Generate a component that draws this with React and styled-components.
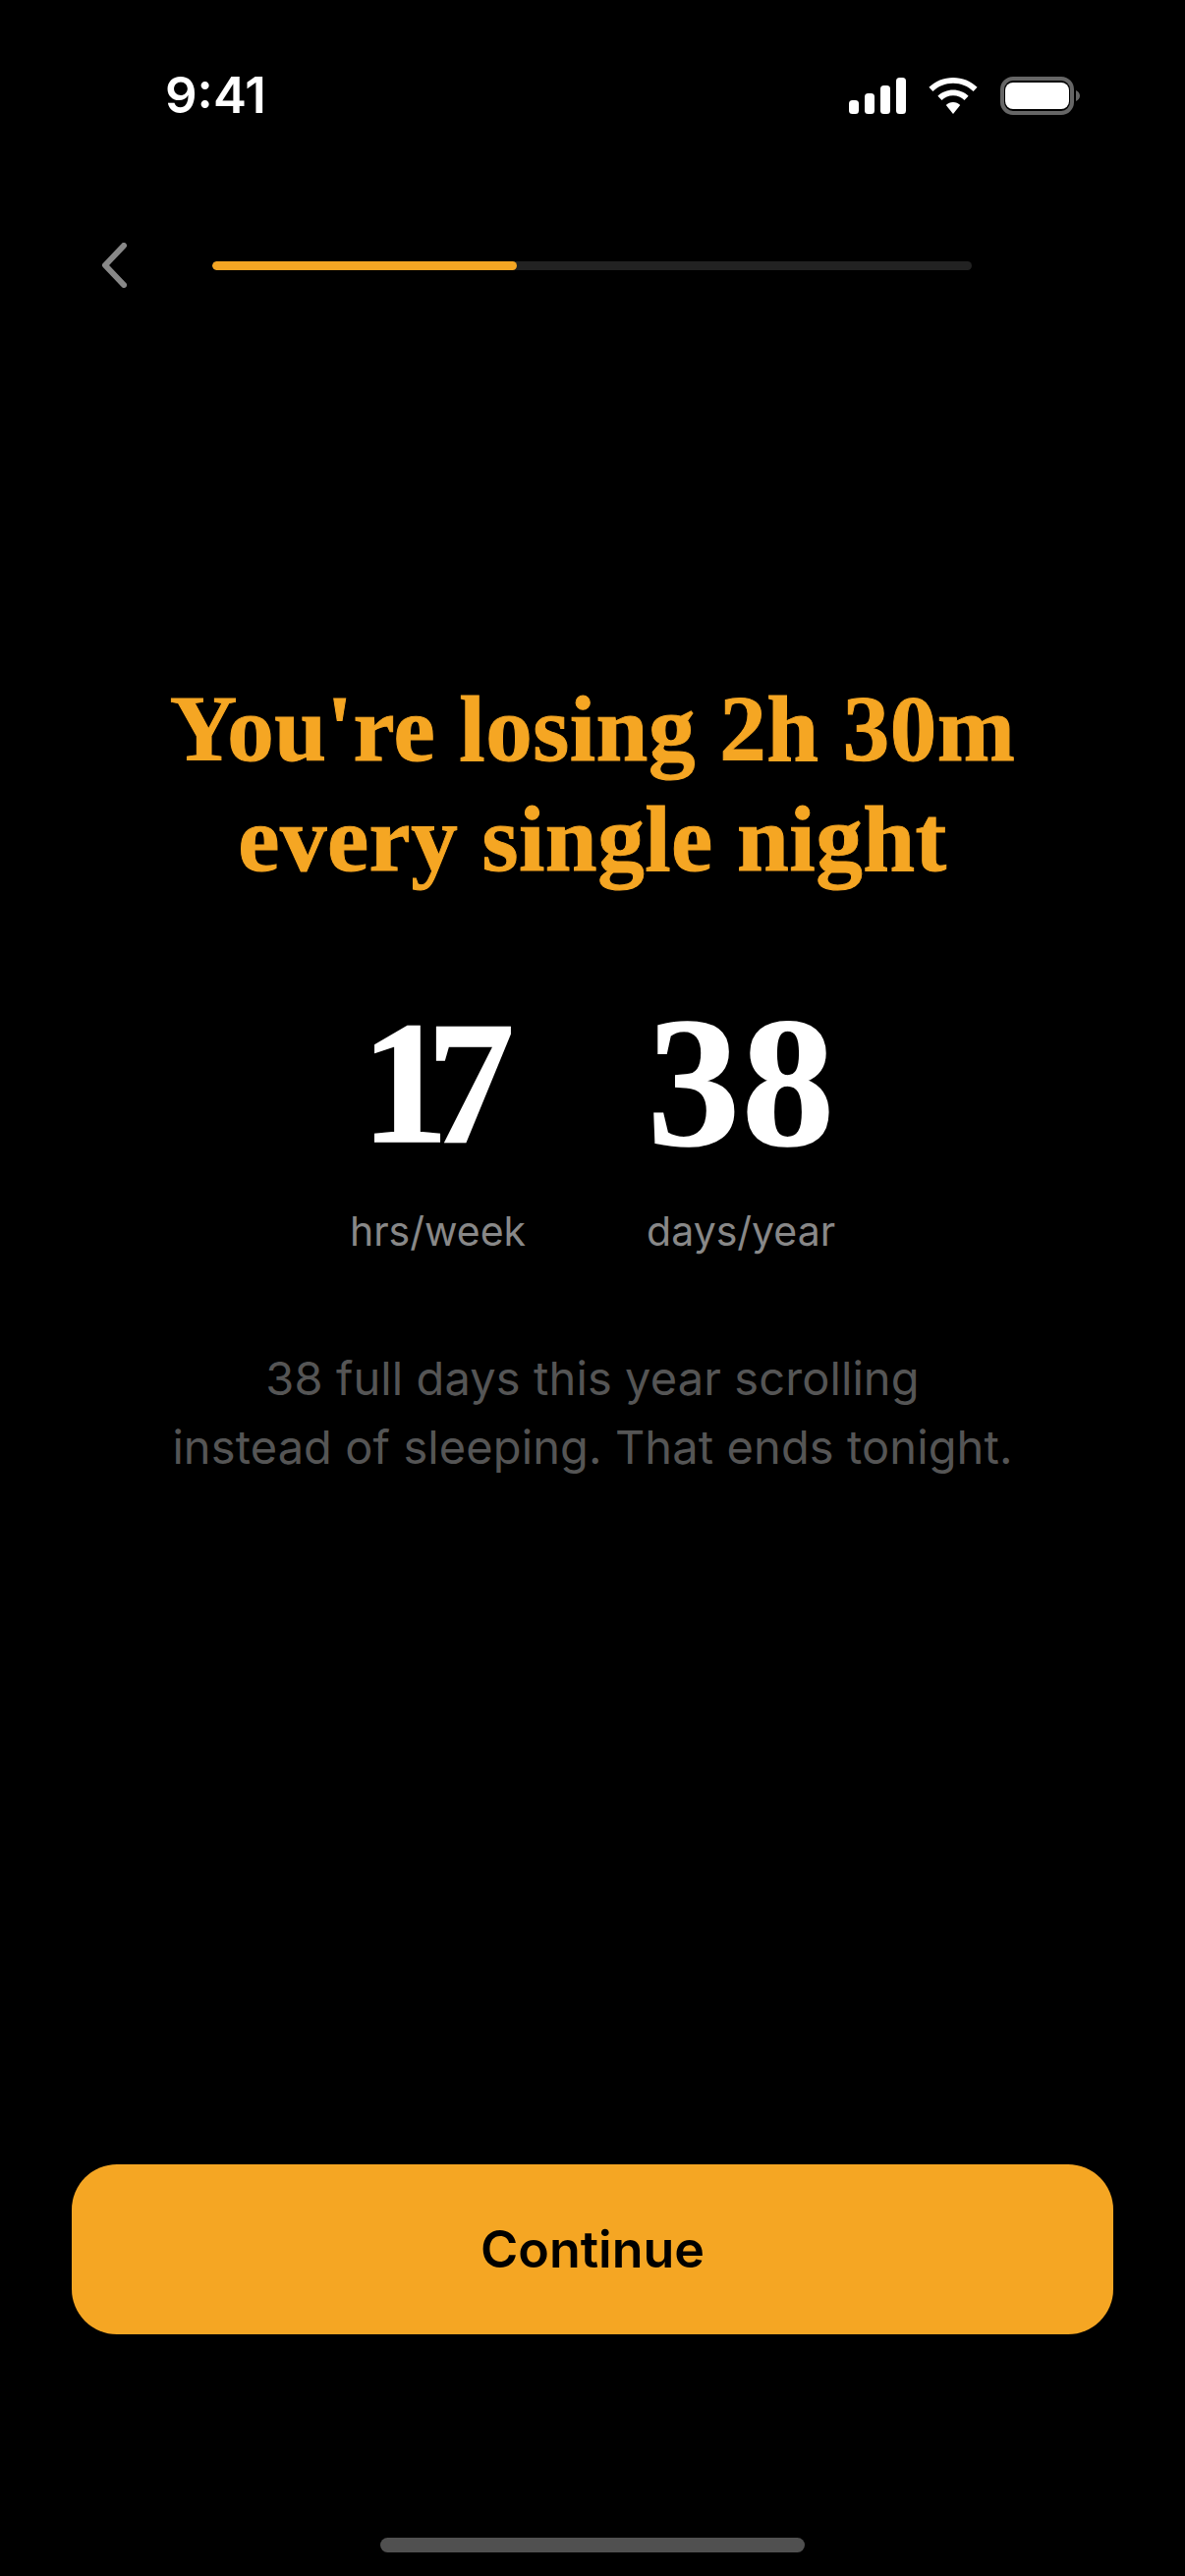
import styled, { createGlobalStyle } from "styled-components";

const GlobalStyle = createGlobalStyle`
  html, body {
    margin: 0;
    padding: 0;
    background: #000;
  }
  * {
    box-sizing: border-box;
  }
`;

const Page = styled.div`
  width: 1206px;
  height: 2622px;
  background: #000;
  display: flex;
  flex-direction: column;
  font-family: Inter, "Liberation Sans", sans-serif;
  overflow: hidden;
`;

const StatusBar = styled.div`
  display: flex;
  align-items: center;
  justify-content: space-between;
  height: 40px;
  margin-top: 77px;
  padding: 0 107px 0 168px;
`;

const Clock = styled.span`
  color: #fff;
  font-size: 51px;
  font-weight: 600;
  line-height: 40px;
`;

const StatusIcons = styled.div`
  display: flex;
  align-items: center;
  gap: 23px;
`;

const TopBar = styled.div`
  display: flex;
  align-items: center;
  gap: 87px;
  height: 46px;
  margin-top: 130px;
  padding-left: 104px;
`;

const BackButton = styled.button`
  display: flex;
  width: 25px;
  height: 46px;
  padding: 0;
  border: none;
  background: none;
`;

const ProgressTrack = styled.div`
  width: 773px;
  height: 9px;
  border-radius: 5px;
  background: #222;
  overflow: hidden;
`;

const ProgressFill = styled.div`
  height: 100%;
  border-radius: 5px;
  background: #f5a623;
`;

const Main = styled.main`
  flex: 1;
  display: flex;
  flex-direction: column;
  align-items: center;
  padding-top: 393px;
`;

const Headline = styled.h1`
  margin: 0;
  color: #f5a623;
  font-family: "Liberation Serif", serif;
  font-size: 95px;
  font-weight: 700;
  line-height: 112px;
  letter-spacing: 0.5px;
  text-align: center;
  -webkit-text-stroke: 1px #f5a623;
`;

const Stats = styled.div`
  display: flex;
  justify-content: center;
  gap: 123px;
  margin-top: 103px;
`;

const Stat = styled.div`
  display: flex;
  flex-direction: column;
  align-items: center;
`;

const StatValue = styled.div`
  color: #fff;
  font-family: "Liberation Serif", serif;
  font-size: ${(props) => props.$size}px;
  font-weight: 700;
  line-height: 178px;
  letter-spacing: ${(props) => props.$tracking}px;
  margin-right: ${(props) => -props.$tracking}px;
  -webkit-text-stroke: 1.5px #fff;
`;

const StatLabel = styled.div`
  margin-top: 37px;
  color: #888;
  font-size: 41px;
  line-height: 50px;
`;

const Note = styled.p`
  margin: 90px 0 0;
  color: #555;
  font-size: 47px;
  line-height: 70px;
  letter-spacing: 0.1px;
  text-align: center;
`;

const Footer = styled.footer`
  display: flex;
  flex-direction: column;
  align-items: center;
  padding: 0 73px 24px;
`;

const ContinueButton = styled.button`
  width: 100%;
  height: 173px;
  border: none;
  border-radius: 46px;
  background: #f5a623;
  color: #000;
  font-family: Inter, "Liberation Sans", sans-serif;
  font-size: 52px;
  font-weight: 600;
`;

const HomeBar = styled.div`
  width: 432px;
  height: 15px;
  margin-top: 207px;
  border-radius: 8px;
  background: #505050;
`;

const SignalIcon = () => (
  <svg width="58" height="37" viewBox="0 0 58 37" fill="#fff">
    <rect x="0" y="23" width="10" height="14" rx="3.5" />
    <rect x="16" y="16" width="10" height="21" rx="3.5" />
    <rect x="32" y="8" width="10" height="29" rx="3.5" />
    <rect x="48" y="0" width="10" height="37" rx="3.5" />
  </svg>
);

const WifiIcon = () => (
  <svg width="50" height="37" viewBox="0 0 50 37" fill="#fff">
    <path d="M25 0C34.5 0 43.2 3.7 49.6 9.8L45.6 14C40.2 8.9 33 5.8 25 5.8S9.800 8.900 4.400 14L.4 9.800C6.800 3.700 15.500 0 25 0Z" />
    <path d="M25 12.500C31 12.500 36.500 14.800 40.600 18.700L36.500 23C33.500 20.100 29.500 18.300 25 18.300S16.500 20.100 13.500 23L9.400 18.700C13.500 14.800 19 12.500 25 12.500Z" />
    <path d="M25 25C27.800 25 30.300 26.100 32.200 27.900L25 37L17.800 27.900C19.700 26.100 22.200 25 25 25Z" />
  </svg>
);

const BatteryIcon = () => (
  <svg width="81" height="39" viewBox="0 0 81 39">
    <rect x="2" y="2" width="71" height="35" rx="11" fill="none" stroke="#666" strokeWidth="4" />
    <rect x="5" y="6" width="65" height="27" rx="8" fill="#fff" />
    <path d="M77 14C79.500 15 81 17 81 19.500S79.500 24 77 25Z" fill="#666" />
  </svg>
);

const BackIcon = () => (
  <svg width="25" height="46" viewBox="0 0 25 46" fill="none">
    <path d="M22 3L3 23L22 43" stroke="#888" strokeWidth="6" strokeLinecap="round" strokeLinejoin="round" />
  </svg>
);

export default function App() {
  return (
    <Page>
      <GlobalStyle />
      <StatusBar>
        <Clock>9:41</Clock>
        <StatusIcons>
          <SignalIcon />
          <WifiIcon />
          <BatteryIcon />
        </StatusIcons>
      </StatusBar>
      <TopBar>
        <BackButton aria-label="Back">
          <BackIcon />
        </BackButton>
        <ProgressTrack>
          <ProgressFill style={{ width: "40.1%" }} />
        </ProgressTrack>
      </TopBar>
      <Main>
        <Headline>
          You're losing 2h 30m
          <br />
          every single night
        </Headline>
        <Stats>
          <Stat>
            <StatValue $size={178} $tracking={-22}>17</StatValue>
            <StatLabel>hrs/week</StatLabel>
          </Stat>
          <Stat>
            <StatValue $size={188} $tracking={2}>38</StatValue>
            <StatLabel>days/year</StatLabel>
          </Stat>
        </Stats>
        <Note>
          38 full days this year scrolling
          <br />
          instead of sleeping. That ends tonight.
        </Note>
      </Main>
      <Footer>
        <ContinueButton>Continue</ContinueButton>
        <HomeBar />
      </Footer>
    </Page>
  );
}
